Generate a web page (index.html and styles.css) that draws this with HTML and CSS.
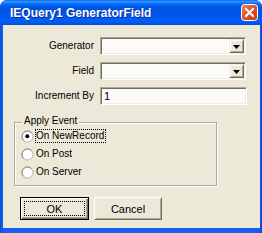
FILE: index.html
```html
<!DOCTYPE html>
<html>
<head>
<meta charset="utf-8">
<link rel="stylesheet" href="styles.css">
</head>
<body>
<div class="window">
  <div class="titlebar">
    <span class="title">IEQuery1 GeneratorField</span>
    <svg class="close" width="17" height="17" viewBox="0 0 17 17">
      <defs>
        <linearGradient id="cg" x1="0" y1="0" x2="1" y2="1">
          <stop offset="0" stop-color="#f08a62"/>
          <stop offset="0.45" stop-color="#e0552c"/>
          <stop offset="1" stop-color="#c03a14"/>
        </linearGradient>
      </defs>
      <rect x="0.5" y="0.5" width="16" height="16" rx="3" fill="url(#cg)" stroke="#fff"/>
      <path d="M5 5 L12 12 M12 5 L5 12" stroke="#fff" stroke-width="2" stroke-linecap="square"/>
    </svg>
  </div>
  <div class="frame">
    <div class="client">
      <div class="form">
        <span class="label">Generator</span>
        <div class="combo"><span class="dropbtn"><svg width="7" height="4" viewBox="0 0 7 4"><path d="M0 0 H7 L3.5 4 Z" fill="#000"/></svg></span></div>
        <span class="label">Field</span>
        <div class="combo"><span class="dropbtn"><svg width="7" height="4" viewBox="0 0 7 4"><path d="M0 0 H7 L3.5 4 Z" fill="#000"/></svg></span></div>
        <span class="label">Increment By</span>
        <div class="edit">1</div>
      </div>
      <div class="group">
        <span class="legend">Apply Event</span>
        <div class="radio">
          <svg width="13" height="13" viewBox="0 0 13 13"><circle cx="6.5" cy="6.5" r="5.5" fill="#fff" stroke="#b4b2a4"/><path d="M2.6 10.4 A5.5 5.5 0 0 1 10.4 2.6" fill="none" stroke="#8d8b7e"/><circle cx="6.3" cy="6.3" r="2" fill="#000"/></svg>
          <span class="rlabel focus">On NewRecord</span>
        </div>
        <div class="radio">
          <svg width="13" height="13" viewBox="0 0 13 13"><circle cx="6.5" cy="6.5" r="5.5" fill="#fff" stroke="#b4b2a4"/><path d="M2.6 10.4 A5.5 5.5 0 0 1 10.4 2.6" fill="none" stroke="#8d8b7e"/></svg>
          <span class="rlabel">On Post</span>
        </div>
        <div class="radio">
          <svg width="13" height="13" viewBox="0 0 13 13"><circle cx="6.5" cy="6.5" r="5.5" fill="#fff" stroke="#b4b2a4"/><path d="M2.6 10.4 A5.5 5.5 0 0 1 10.4 2.6" fill="none" stroke="#8d8b7e"/></svg>
          <span class="rlabel">On Server</span>
        </div>
      </div>
      <div class="buttons">
        <div class="btn default"><span class="focusrect">OK</span></div>
        <div class="btn cancel"><span class="btntext">Cancel</span></div>
      </div>
    </div>
  </div>
</div>
</body>
</html>
```
FILE: styles.css
```css
html, body {
  margin: 0;
  padding: 0;
  background: #ffffff;
}
body {
  font-family: "Liberation Sans", Arial, sans-serif;
  font-size: 10px;
  color: #000;
}
.window {
  width: 262px;
  height: 233px;
  display: flex;
  flex-direction: column;
  border-radius: 7px 7px 0 0;
  overflow: hidden;
  background: #0853e0;
}
.titlebar {
  height: 25px;
  flex: none;
  box-sizing: border-box;
  display: flex;
  align-items: center;
  padding: 0 4px 0 10px;
  background: linear-gradient(to bottom, #0058ee 0px, #3593ff 1px, #288eff 2px, #127dff 3px, #036ffc 4px, #0262ee 5px, #0057e5 7px, #0054e3 9px, #0055eb 15px, #005bf5 18px, #0260f6 21px, #0058e6 23px, #0050d8 25px);
}
.title {
  flex: 1;
  color: #fff;
  font-weight: bold;
  font-size: 12px;
  white-space: nowrap;
  text-shadow: 1px 1px #0a2a9a;
  letter-spacing: 0;
}
.close {
  display: block;
  flex: none;
}
.frame {
  flex: 1;
  display: flex;
  padding: 0 2px 5px 3px;
  background: linear-gradient(to right, #0a4fd8 0, #1660f0 3px, #1660f0 259px, #0642c8 262px);
}
.client {
  flex: 1;
  background: #ece9d8;
  display: flex;
  flex-direction: column;
  padding-top: 12px;
}
.form {
  display: grid;
  grid-template-columns: 91px 147px;
  grid-auto-rows: 18px;
  column-gap: 6px;
  row-gap: 7px;
  align-items: center;
}
.label {
  text-align: right;
  white-space: nowrap;
  line-height: 12px;
}
.combo {
  width: 146px;
  height: 18px;
  box-sizing: border-box;
  border: 1px solid;
  border-color: #aca899 #ffffff #ffffff #aca899;
  box-shadow: inset 1px 1px #716f64, inset -1px -1px #f1efe2;
  background: #fbfbf9;
  display: flex;
  justify-content: flex-end;
  padding: 1px;
}
.dropbtn {
  width: 15px;
  height: 14px;
  box-sizing: border-box;
  border: 1px solid;
  border-color: #f1efe2 #716f64 #716f64 #f1efe2;
  box-shadow: inset 1px 1px #ffffff, inset -1px -1px #aca899;
  background: #ece9d8;
  display: flex;
  align-items: center;
  justify-content: center;
  padding-top: 1px;
}
.dropbtn svg {
  display: block;
}
.edit {
  width: 147px;
  height: 18px;
  box-sizing: border-box;
  border: 1px solid;
  border-color: #aca899 #ffffff #ffffff #aca899;
  box-shadow: inset 1px 1px #716f64, inset -1px -1px #f1efe2;
  background: #fbfbf9;
  padding: 0 3px;
  font-size: 11px;
  line-height: 16px;
}
.group {
  margin: 17px 0 0 11px;
  width: 203px;
  height: 64px;
  box-sizing: border-box;
  border: 1px solid #aca899;
  box-shadow: inset 1px 1px #ffffff, 1px 1px #ffffff;
  display: flex;
  flex-direction: column;
}
.legend {
  align-self: flex-start;
  margin: -8px 0 0 7px;
  padding: 0 2px;
  background: #ece9d8;
  line-height: 12px;
  white-space: nowrap;
}
.radio {
  height: 18px;
  display: flex;
  align-items: center;
  padding-left: 6px;
}
.radio svg {
  display: block;
  flex: none;
}
.rlabel {
  margin-left: 1px;
  border: 1px solid transparent;
  line-height: 12px;
  padding: 0 1px 0 0;
  white-space: nowrap;
}
.rlabel.focus {
  border: 1px dotted #000;
}
.buttons {
  display: flex;
  gap: 5px;
  margin: 11px 0 0 17px;
}
.btn {
  height: 23px;
  box-sizing: border-box;
  background: #ece9d8;
  display: flex;
  align-items: stretch;
}
.btn.default {
  width: 69px;
  border: 1px solid #000;
  box-shadow: inset 1px 1px #ffffff, inset -1px -1px #716f64, inset -2px -2px #aca899;
  padding: 3px;
}
.btn.cancel {
  width: 68px;
  border: 1px solid;
  border-color: #ffffff #716f64 #716f64 #ffffff;
  box-shadow: inset 1px 1px #f1efe2, inset -1px -1px #aca899;
}
.focusrect {
  flex: 1;
  border: 1px dotted #000;
  display: flex;
  align-items: center;
  justify-content: center;
  font-size: 11px;
}
.btntext {
  flex: 1;
  display: flex;
  align-items: center;
  justify-content: center;
  font-size: 11px;
}
```
